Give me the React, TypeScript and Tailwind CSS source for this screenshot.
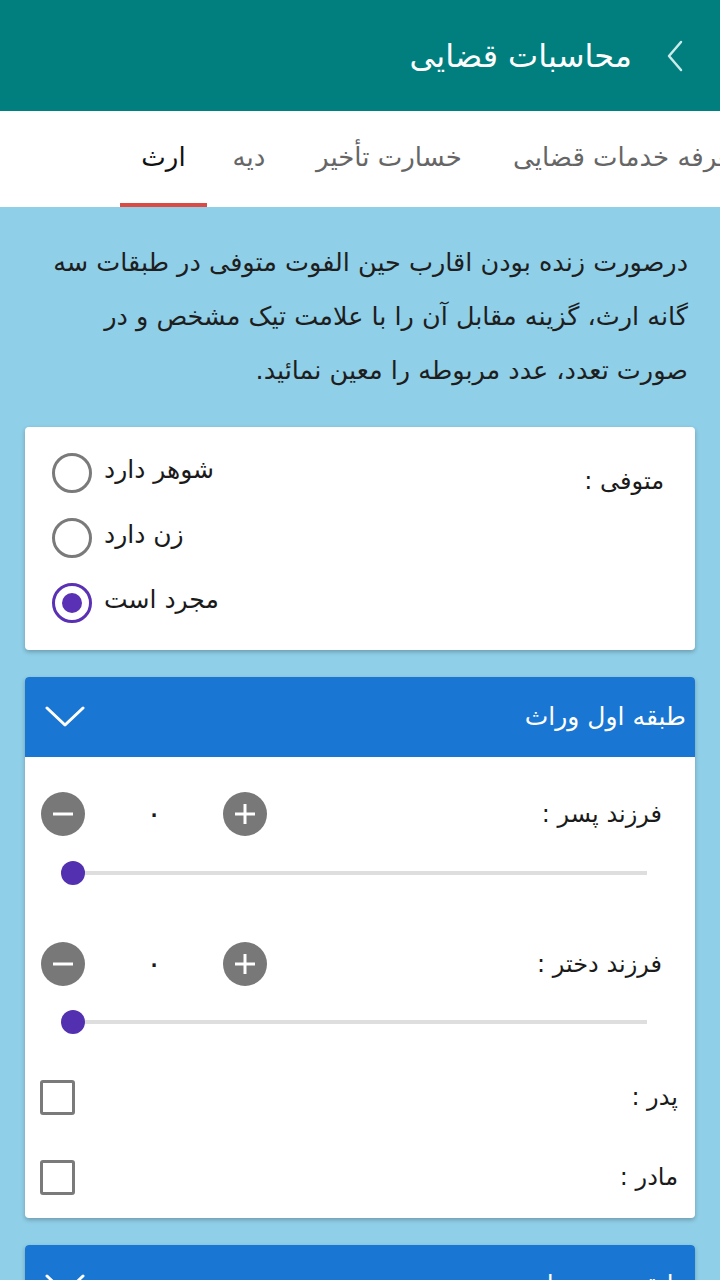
import React from "react";

const ChevronDown = () => (
  <svg width="40" height="22" viewBox="0 0 40 22" fill="none">
    <path d="M2 2 L20 19 L38 2" stroke="white" strokeWidth="3" strokeLinecap="round" strokeLinejoin="round" />
  </svg>
);

const Radio = ({ checked, label }: { checked?: boolean; label: string }) => (
  <div className="flex items-center h-[40px]">
    <div
      className={
        checked
          ? "w-[40px] h-[40px] rounded-full border-[3px] border-[#5a30b5] flex items-center justify-center"
          : "w-[40px] h-[40px] rounded-full border-[3px] border-[#7a7a7a]"
      }
    >
      {checked ? <div className="w-[20px] h-[20px] rounded-full bg-[#5a30b5]" /> : null}
    </div>
    <span dir="rtl" className="ml-[12px] text-[25px] text-[#1a1a1a] leading-[40px] -mt-[6px]">
      {label}
    </span>
  </div>
);

const RoundBtn = ({ plus }: { plus?: boolean }) => (
  <div className="w-[44px] h-[44px] rounded-full bg-[#787878] flex items-center justify-center">
    <svg width="22" height="22" viewBox="0 0 22 22">
      <path d="M1 11 H21" stroke="white" strokeWidth="3" />
      {plus ? <path d="M11 1 V21" stroke="white" strokeWidth="3" /> : null}
    </svg>
  </div>
);

const Stepper = ({ label }: { label: string }) => (
  <div className="flex items-center justify-between h-[44px] pl-[16px] pr-[33px]">
    <div className="flex items-center">
      <RoundBtn />
      <div className="w-[138px] text-center text-[30px] leading-[44px] text-[#1a1a1a]">۰</div>
      <RoundBtn plus />
    </div>
    <span dir="rtl" className="text-[24px] text-[#1a1a1a]">{label}</span>
  </div>
);

const Slider = () => (
  <div className="flex items-center h-[24px] pl-[36px] pr-[48px]">
    <div className="relative z-10 w-[24px] h-[24px] rounded-full bg-[#5230b0] shrink-0" />
    <div className="flex-1 h-[4px] bg-[#dedede] -ml-[12px]" />
  </div>
);

const Check = ({ label }: { label: string }) => (
  <div className="flex items-center justify-between h-[40px] pl-[15px] pr-[17px]">
    <div className="w-[35px] h-[35px] rounded-[3px] border-[3px] border-[#7a7a7a]" />
    <span dir="rtl" className="text-[24px] text-[#1a1a1a]">{label}</span>
  </div>
);

export default function App() {
  return (
    <div className="w-[720px] min-h-[1280px] bg-[#8fcfe8] font-['DejaVu_Sans',sans-serif] overflow-hidden">
      {/* App bar */}
      <div className="h-[111px] bg-[#007f7e] flex items-center justify-end pr-[36px] gap-[34px]">
        <span dir="rtl" className="text-white text-[32px]">محاسبات قضایی</span>
        <svg width="18" height="32" viewBox="0 0 18 32" fill="none">
          <path d="M15 2 L3 16 L15 30" stroke="#c9ecea" strokeWidth="2.5" strokeLinecap="round" strokeLinejoin="round" />
        </svg>
      </div>

      {/* Tabs */}
      <div className="h-[96px] bg-white flex pl-[120px] overflow-hidden whitespace-nowrap">
        <div className="w-[87px] shrink-0 flex items-center justify-center border-b-4 border-[#dc4a44] text-[26px] text-[#111]">
          <span dir="rtl">ارث</span>
        </div>
        <div className="w-[84px] shrink-0 flex items-center justify-center border-b-4 border-transparent text-[26px] text-[#666]">
          <span dir="rtl">دیه</span>
        </div>
        <div className="w-[196px] shrink-0 flex items-center justify-center border-b-4 border-transparent text-[26px] text-[#666]">
          <span dir="rtl">خسارت تأخیر</span>
        </div>
        <div className="shrink-0 flex items-center pl-[26px] border-b-4 border-transparent text-[26px] text-[#666]">
          <span dir="rtl">تعرفه خدمات قضایی</span>
        </div>
      </div>

      {/* Intro text */}
      <div dir="rtl" className="px-[32px] pt-[28px] text-right text-[25.5px] leading-[54px] text-[#1e1e1e]">
        درصورت زنده بودن اقارب حین الفوت متوفی در طبقات سه
        <br />
        گانه ارث، گزینه مقابل آن را با علامت تیک مشخص و در
        <br />
        صورت تعدد، عدد مربوطه را معین نمائید.
      </div>

      {/* Deceased card */}
      <div className="mx-[25px] mt-[30px] h-[223px] bg-white rounded-[4px] shadow-[0_2px_4px_rgba(0,0,0,0.25)] flex justify-between">
        <div className="flex flex-col gap-[25px] pl-[27px] pt-[26px]">
          <Radio label="شوهر دارد" />
          <Radio label="زن دارد" />
          <Radio checked label="مجرد است" />
        </div>
        <div dir="rtl" className="pr-[31px] pt-[36px] text-[24px] text-[#1a1a1a]">متوفی :</div>
      </div>

      {/* First class heirs */}
      <div className="mx-[25px] mt-[27px] bg-white rounded-[4px] shadow-[0_2px_4px_rgba(0,0,0,0.25)] overflow-hidden">
        <div className="h-[80px] bg-[#1976d2] flex items-center justify-between pl-[20px] pr-[9px]">
          <ChevronDown />
          <span dir="rtl" className="text-white text-[25px]">طبقه اول وراث</span>
        </div>
        <div className="pt-[35px] pb-[21px] flex flex-col">
          <Stepper label="فرزند پسر :" />
          <div className="mt-[25px]">
            <Slider />
          </div>
          <div className="mt-[57px]">
            <Stepper label="فرزند دختر :" />
          </div>
          <div className="mt-[24px]">
            <Slider />
          </div>
          <div className="mt-[43px]">
            <Check label="پدر :" />
          </div>
          <div className="mt-[40px]">
            <Check label="مادر :" />
          </div>
        </div>
      </div>

      {/* Second class heirs */}
      <div className="mx-[25px] mt-[27px] bg-white rounded-[4px] shadow-[0_2px_4px_rgba(0,0,0,0.25)] overflow-hidden">
        <div className="h-[80px] bg-[#1976d2] flex items-center justify-between pl-[20px] pr-[9px]">
          <ChevronDown />
          <span dir="rtl" className="text-white text-[25px]">طبقه دوم وراث</span>
        </div>
      </div>
    </div>
  );
}
